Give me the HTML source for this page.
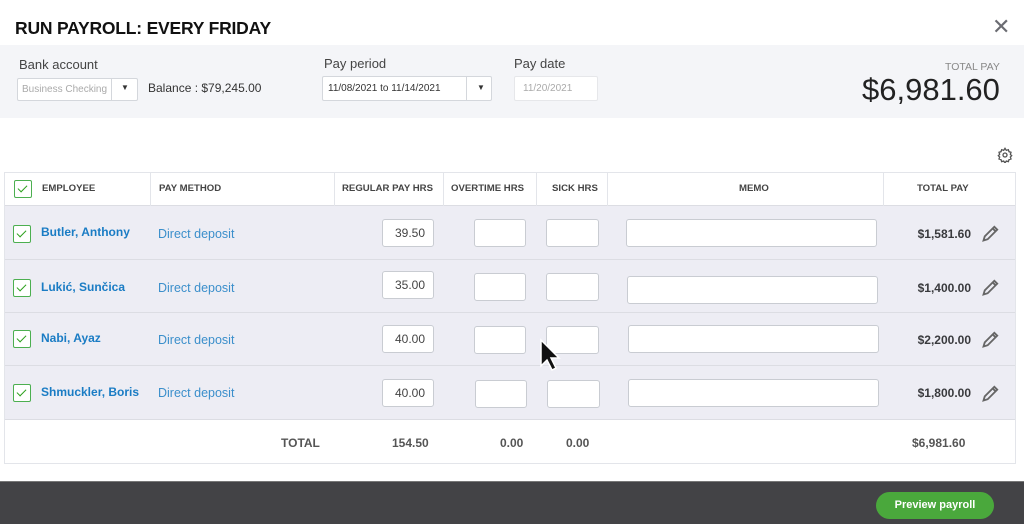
<!DOCTYPE html>
<html><head><meta charset="utf-8"><style>
*{box-sizing:border-box;margin:0;padding:0}
body{width:1024px;height:524px;overflow:hidden;background:#fff;font-family:"Liberation Sans",sans-serif;position:relative;color:#393a3d}
.a{position:absolute}
.title{left:15px;top:18px;font-size:17.5px;font-weight:bold;color:#111;letter-spacing:-0.2px}
.band{left:0;top:45px;width:1024px;height:73px;background:#f4f5f8}
.lbl{font-size:13px;color:#444}
.sel{background:#fff;border:1px solid #d4d7dc;border-radius:2px;font-size:10px}
.tbl{left:4px;top:172px;width:1012px;height:292px;border:1px solid #e3e5ea;background:#fff}
.hdr{font-size:9.6px;font-weight:bold;color:#444;top:183px}
.row{left:5px;width:1010px;background:#ededf4;border-bottom:1px solid #dcdde3}
.vl{top:173px;width:1px;height:33px;background:#e3e5ea}
.cb{width:18px;height:18px;border:1.5px solid #4caf50;border-radius:2px;background:#fff}
.cb:after{content:"";position:absolute;left:5px;top:2px;width:4px;height:8px;border:solid #2ca01c;border-width:0 1.5px 1.5px 0;transform:rotate(45deg)}
.nm{font-size:12px;font-weight:bold;color:#1a7cc4}
.dd{font-size:12.5px;color:#3b8fcb}
.in{background:#fff;border:1px solid #c9ccd2;border-radius:3px;height:28px;font-size:12px;text-align:right;padding:6px 8px 0 0;color:#444}
.tp{font-size:12px;font-weight:bold;color:#393a3d;width:80px;text-align:right}
.tot{font-size:12px;font-weight:bold;color:#555;top:436px}
</style></head><body>
<div class="a title">RUN PAYROLL: EVERY FRIDAY</div>
<div class="a" style="left:992px;top:14px;font-size:22px;color:#6b6c72">✕</div>
<div class="a band"></div>
<div class="a lbl" style="left:19px;top:57px">Bank account</div>
<div class="a sel" style="left:17px;top:78px;width:121px;height:23px;color:#aaa;padding:5px 0 0 4px">Business Checking<span style="position:absolute;left:93px;top:0;width:1px;height:21px;background:#d4d7dc"></span><span style="position:absolute;left:103px;top:4px;color:#333;font-size:8px">▼</span></div>
<div class="a" style="left:148px;top:81px;font-size:12px;color:#333">Balance : $79,245.00</div>
<div class="a lbl" style="left:324px;top:56px">Pay period</div>
<div class="a sel" style="left:322px;top:76px;width:170px;height:25px;color:#333;padding:6px 0 0 5px">11/08/2021 to 11/14/2021<span style="position:absolute;left:143px;top:0;width:1px;height:23px;background:#d4d7dc"></span><span style="position:absolute;left:154px;top:6px;font-size:8px">▼</span></div>
<div class="a lbl" style="left:514px;top:56px">Pay date</div>
<div class="a sel" style="left:514px;top:76px;width:84px;height:25px;color:#aaa;padding:6px 0 0 8px;border-color:#e6e7ea">11/20/2021</div>
<div class="a" style="left:945px;top:61px;font-size:10.5px;color:#888">TOTAL PAY</div>
<div class="a" style="left:862px;top:72px;font-size:31px;color:#222">$6,981.60</div>
<svg class="a" style="left:997px;top:147px" width="16" height="16" viewBox="0 0 24 24" fill="none" stroke="#555" stroke-width="2"><circle cx="12" cy="12" r="3"/><path d="M12 2l2 3 3-1 1 3 3 1-1 3 2 2-2 2 1 3-3 1-1 3-3-1-2 3-2-3-3 1-1-3-3-1 1-3-2-2 2-2-1-3 3-1 1-3 3 1z"/></svg>
<div class="a tbl"></div>
<div class="a" style="left:5px;top:205px;width:1010px;height:1px;background:#dcdde3"></div>
<div class="a vl" style="left:150px"></div><div class="a vl" style="left:334px"></div><div class="a vl" style="left:443px"></div><div class="a vl" style="left:536px"></div><div class="a vl" style="left:607px"></div><div class="a vl" style="left:883px"></div>
<div class="a cb" style="left:14px;top:180px"></div>
<div class="a hdr" style="left:42px">EMPLOYEE</div>
<div class="a hdr" style="left:159px">PAY METHOD</div>
<div class="a hdr" style="left:342px">REGULAR PAY HRS</div>
<div class="a hdr" style="left:451px">OVERTIME HRS</div>
<div class="a hdr" style="left:552px">SICK HRS</div>
<div class="a hdr" style="left:739px">MEMO</div>
<div class="a hdr" style="left:917px">TOTAL PAY</div>

<div class="a row" style="top:206px;height:54px"></div>
<div class="a row" style="top:260px;height:53px"></div>
<div class="a row" style="top:313px;height:53px"></div>
<div class="a row" style="top:366px;height:54px"></div>

<div class="a cb" style="left:13px;top:225px"></div><div class="a nm" style="left:41px;top:225px">Butler, Anthony</div><div class="a dd" style="left:158px;top:227px">Direct deposit</div>
<div class="a in" style="left:382px;top:219px;width:52px">39.50</div><div class="a in" style="left:474px;top:219px;width:52px"></div><div class="a in" style="left:546px;top:219px;width:53px"></div><div class="a in" style="left:626px;top:219px;width:251px"></div>
<div class="a tp" style="left:891px;top:227px">$1,581.60</div>

<div class="a cb" style="left:13px;top:279px"></div><div class="a nm" style="left:41px;top:280px">Lukić, Sunčica</div><div class="a dd" style="left:158px;top:281px">Direct deposit</div>
<div class="a in" style="left:382px;top:271px;width:52px">35.00</div><div class="a in" style="left:474px;top:273px;width:52px"></div><div class="a in" style="left:546px;top:273px;width:53px"></div><div class="a in" style="left:627px;top:276px;width:251px"></div>
<div class="a tp" style="left:891px;top:281px">$1,400.00</div>

<div class="a cb" style="left:13px;top:330px"></div><div class="a nm" style="left:41px;top:331px">Nabi, Ayaz</div><div class="a dd" style="left:158px;top:333px">Direct deposit</div>
<div class="a in" style="left:382px;top:325px;width:52px">40.00</div><div class="a in" style="left:474px;top:326px;width:52px"></div><div class="a in" style="left:546px;top:326px;width:53px"></div><div class="a in" style="left:628px;top:325px;width:251px"></div>
<div class="a tp" style="left:891px;top:333px">$2,200.00</div>

<div class="a cb" style="left:13px;top:384px"></div><div class="a nm" style="left:41px;top:385px">Shmuckler, Boris</div><div class="a dd" style="left:158px;top:386px">Direct deposit</div>
<div class="a in" style="left:382px;top:379px;width:52px">40.00</div><div class="a in" style="left:475px;top:380px;width:52px"></div><div class="a in" style="left:547px;top:380px;width:53px"></div><div class="a in" style="left:628px;top:379px;width:251px"></div>
<div class="a tp" style="left:891px;top:386px">$1,800.00</div>

<svg class="a" style="left:981px;top:223px" width="20" height="20" viewBox="0 0 24 24" fill="none" stroke="#666" stroke-width="2.2"><path d="M3 21l1.5-5L16 4.5l3.5 3.5L8 19.5z M14 6.5l3.5 3.5"/></svg>
<svg class="a" style="left:981px;top:277px" width="20" height="20" viewBox="0 0 24 24" fill="none" stroke="#666" stroke-width="2.2"><path d="M3 21l1.5-5L16 4.5l3.5 3.5L8 19.5z M14 6.5l3.5 3.5"/></svg>
<svg class="a" style="left:981px;top:329px" width="20" height="20" viewBox="0 0 24 24" fill="none" stroke="#666" stroke-width="2.2"><path d="M3 21l1.5-5L16 4.5l3.5 3.5L8 19.5z M14 6.5l3.5 3.5"/></svg>
<svg class="a" style="left:981px;top:383px" width="20" height="20" viewBox="0 0 24 24" fill="none" stroke="#666" stroke-width="2.2"><path d="M3 21l1.5-5L16 4.5l3.5 3.5L8 19.5z M14 6.5l3.5 3.5"/></svg>

<div class="a tot" style="left:281px">TOTAL</div>
<div class="a tot" style="left:392px">154.50</div>
<div class="a tot" style="left:500px">0.00</div>
<div class="a tot" style="left:566px">0.00</div>
<div class="a tot" style="left:912px">$6,981.60</div>

<svg class="a" style="left:539px;top:338px" width="22" height="34" viewBox="0 0 22 34"><path d="M2 2v26l6-6 5 10 4-2-5-10h8z" fill="#111" stroke="#fff" stroke-width="1.5"/></svg>

<div class="a" style="left:0;top:481px;width:1024px;height:43px;background:#434346;border-top:1px solid #777"></div>
<div class="a" style="left:876px;top:492px;width:118px;height:27px;border-radius:14px;background:#4aa83c;color:#fff;font-size:11px;font-weight:bold;text-align:center;padding-top:7px">Preview payroll</div>
</body></html>
